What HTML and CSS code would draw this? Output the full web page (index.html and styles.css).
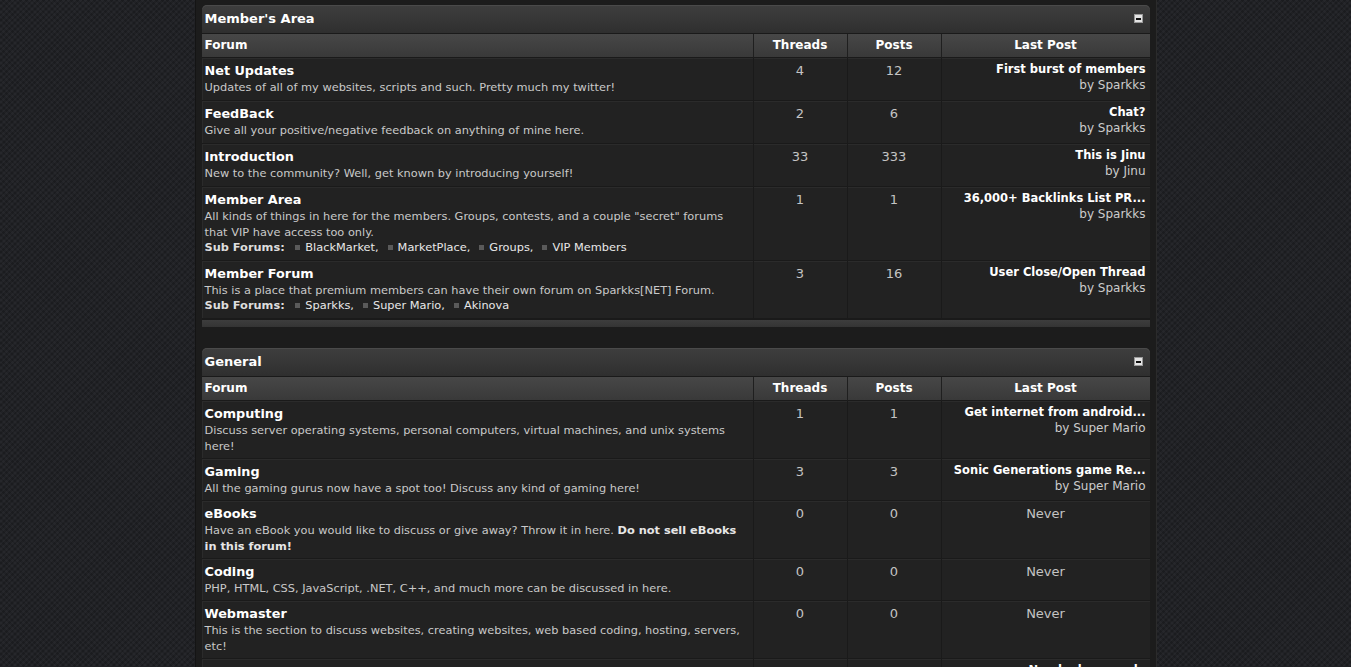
FILE: index.html
```html
<!DOCTYPE html>
<html>
<head>
<meta charset="utf-8">
<title>Sparkks[NET] Forum</title>
<link rel="stylesheet" href="styles.css">
</head>
<body>
<div class="wrapper">

<table class="cat">
  <colgroup><col class="w-forum"><col class="w-num"><col class="w-num"><col class="w-last"></colgroup>
  <thead>
    <tr><th class="cat-title" colspan="4"><span class="cat-name">Member's Area</span><span class="collapse"></span></th></tr>
    <tr class="cols">
      <th class="c-forum">Forum</th>
      <th class="c-num">Threads</th>
      <th class="c-num">Posts</th>
      <th class="c-last">Last Post</th>
    </tr>
  </thead>
  <tbody>
    <tr>
      <td class="forum"><div class="ftitle">Net Updates</div><div class="desc">Updates of all of my websites, scripts and such. Pretty much my twitter!</div></td>
      <td class="num">4</td><td class="num">12</td>
      <td class="last"><div class="lp">First burst of members</div><div class="by">by Sparkks</div></td>
    </tr>
    <tr>
      <td class="forum"><div class="ftitle">FeedBack</div><div class="desc">Give all your positive/negative feedback on anything of mine here.</div></td>
      <td class="num">2</td><td class="num">6</td>
      <td class="last"><div class="lp">Chat?</div><div class="by">by Sparkks</div></td>
    </tr>
    <tr>
      <td class="forum"><div class="ftitle">Introduction</div><div class="desc">New to the community? Well, get known by introducing yourself!</div></td>
      <td class="num">33</td><td class="num">333</td>
      <td class="last"><div class="lp">This is Jinu</div><div class="by">by Jinu</div></td>
    </tr>
    <tr>
      <td class="forum"><div class="ftitle">Member Area</div><div class="desc">All kinds of things in here for the members. Groups, contests, and a couple "secret" forums that VIP have access too only.</div>
        <div class="subs"><b>Sub Forums:</b> <span class="sub"><i></i>BlackMarket,</span><span class="sub"><i></i>MarketPlace,</span><span class="sub"><i></i>Groups,</span><span class="sub"><i></i>VIP Members</span></div></td>
      <td class="num">1</td><td class="num">1</td>
      <td class="last"><div class="lp">36,000+ Backlinks List PR...</div><div class="by">by Sparkks</div></td>
    </tr>
    <tr>
      <td class="forum"><div class="ftitle">Member Forum</div><div class="desc">This is a place that premium members can have their own forum on Sparkks[NET] Forum.</div>
        <div class="subs"><b>Sub Forums:</b> <span class="sub"><i></i>Sparkks,</span><span class="sub"><i></i>Super Mario,</span><span class="sub"><i></i>Akinova</span></div></td>
      <td class="num">3</td><td class="num">16</td>
      <td class="last"><div class="lp">User Close/Open Thread</div><div class="by">by Sparkks</div></td>
    </tr>
  </tbody>
  <tfoot><tr><td class="foot" colspan="4"></td></tr></tfoot>
</table>

<table class="cat compact">
  <colgroup><col class="w-forum"><col class="w-num"><col class="w-num"><col class="w-last"></colgroup>
  <thead>
    <tr><th class="cat-title" colspan="4"><span class="cat-name">General</span><span class="collapse"></span></th></tr>
    <tr class="cols">
      <th class="c-forum">Forum</th>
      <th class="c-num">Threads</th>
      <th class="c-num">Posts</th>
      <th class="c-last">Last Post</th>
    </tr>
  </thead>
  <tbody>
    <tr>
      <td class="forum"><div class="ftitle">Computing</div><div class="desc">Discuss server operating systems, personal computers, virtual machines, and unix systems here!</div></td>
      <td class="num">1</td><td class="num">1</td>
      <td class="last"><div class="lp">Get internet from android...</div><div class="by">by Super Mario</div></td>
    </tr>
    <tr>
      <td class="forum"><div class="ftitle">Gaming</div><div class="desc">All the gaming gurus now have a spot too! Discuss any kind of gaming here!</div></td>
      <td class="num">3</td><td class="num">3</td>
      <td class="last"><div class="lp">Sonic Generations game Re...</div><div class="by">by Super Mario</div></td>
    </tr>
    <tr>
      <td class="forum"><div class="ftitle">eBooks</div><div class="desc">Have an eBook you would like to discuss or give away? Throw it in here. <b>Do not sell eBooks in this forum!</b></div></td>
      <td class="num">0</td><td class="num">0</td>
      <td class="never">Never</td>
    </tr>
    <tr>
      <td class="forum"><div class="ftitle">Coding</div><div class="desc">PHP, HTML, CSS, JavaScript, .NET, C++, and much more can be discussed in here.</div></td>
      <td class="num">0</td><td class="num">0</td>
      <td class="never">Never</td>
    </tr>
    <tr>
      <td class="forum"><div class="ftitle">Webmaster</div><div class="desc">This is the section to discuss websites, creating websites, web based coding, hosting, servers, etc!</div></td>
      <td class="num">0</td><td class="num">0</td>
      <td class="never">Never</td>
    </tr>
    <tr>
      <td class="forum"><div class="ftitle">Graphics</div><div class="desc">Share your designs, logos and artwork with the community.</div></td>
      <td class="num">2</td><td class="num">4</td>
      <td class="last"><div class="lp">Need a logo made</div><div class="by">by Sparkks</div></td>
    </tr>
  </tbody>
</table>

</div>
</body>
</html>
```

FILE: styles.css
```css
html, body {
  margin: 0;
  padding: 0;
}
body {
  background-color: #212226;
  background-image:
    repeating-linear-gradient(45deg, rgba(255,255,255,0.025) 0 2px, transparent 2px 4px),
    repeating-linear-gradient(-45deg, rgba(0,0,0,0.18) 0 2px, transparent 2px 4px);
  font-family: "DejaVu Sans", Verdana, sans-serif;
  color: #cfcfcf;
  min-height: 100vh;
}
.wrapper {
  width: 948px;
  margin: 0 auto;
  padding: 5px 6px 20px;
  background: #1c1c1c;
  border-left: 1px solid #141414;
  border-right: 1px solid #2b2b2b;
  min-height: 100vh;
}
table.cat {
  width: 948px;
  border-collapse: separate;
  border-spacing: 0;
  table-layout: fixed;
  margin-bottom: 21px;
}
.w-forum { width: 552px; }
.w-num { width: 94px; }
.w-last { width: 208px; }
.cat th, .cat td {
  box-sizing: border-box;
}
.cat-title {
  height: 28px;
  padding: 0 7px 1px 3px;
  text-align: left;
  font-size: 13px;
  font-weight: bold;
  line-height: 27px;
  color: #ffffff;
  background: linear-gradient(#3e3e3e, #2f2f2f);
  border-top-left-radius: 5px;
  border-top-right-radius: 5px;
  border-bottom: 1px solid #1a1a1a;
  box-shadow: inset 0 1px 0 #4a4a4a;
}
.cat-name {
  float: left;
}
.collapse {
  float: right;
  width: 9px;
  height: 9px;
  margin-top: 9px;
  box-sizing: border-box;
  background: #e4e4e4;
  border: 1px solid #9a9a9a;
  position: relative;
}
.collapse::after {
  content: "";
  position: absolute;
  left: 1px;
  top: 3px;
  width: 5px;
  height: 1px;
  background: #111;
  box-shadow: 0 1px 0 #111;
}
.cols th {
  height: 24px;
  font-size: 12px;
  font-weight: bold;
  color: #ffffff;
  background: linear-gradient(#474747, #393939);
  border-right: 1px solid #1f1f1f;
  border-bottom: 1px solid #1a1a1a;
  padding: 0 4px;
  line-height: 23px;
}
.cols th.c-forum {
  padding-left: 3px;
}
.cols th:last-child {
  border-right: 0;
}
.c-forum { text-align: left; }
.c-num { text-align: center; }
.c-last { text-align: center; }

.cat tbody td {
  background: #222222;
  border-right: 1px solid #1a1a1a;
  border-bottom: 1px solid #1a1a1a;
  box-shadow: inset 0 1px 0 #2b2b2b;
  vertical-align: top;
  padding: 4px 4px 5px;
}
.cat tbody td.forum {
  padding-left: 3px;
  box-shadow: inset 1px 1px 0 #2b2b2b;
}
.cat.compact tbody td {
  padding-bottom: 4px;
}
.cat tbody td:last-child {
  border-right: 0;
}
.ftitle {
  font-size: 12.8px;
  font-weight: bold;
  line-height: 17px;
  color: #ffffff;
}
.desc {
  font-size: 11.35px;
  line-height: 16px;
  color: #c9c9c9;
}
.desc b {
  color: #e6e6e6;
}
.subs {
  font-size: 11.35px;
  line-height: 15px;
  color: #dddddd;
}
.subs b {
  margin-right: 4px;
}
.sub {
  margin-right: 6px;
  color: #e8e8e8;
}
.sub i {
  display: inline-block;
  width: 5px;
  height: 5px;
  background: #5a5a5a;
  margin: 0 5px 1px 3px;
  vertical-align: middle;
}
.num, .never {
  text-align: center;
  font-size: 13px;
  line-height: 18px;
  color: #c4c4c4;
}
.cat tbody td.last {
  text-align: right;
  padding-top: 4px;
}
.lp {
  font-size: 11.5px;
  font-weight: bold;
  line-height: 15px;
  color: #ffffff;
  white-space: nowrap;
}
.by {
  font-size: 12px;
  line-height: 16px;
  color: #cccccc;
}
.foot {
  height: 8px;
  padding: 0;
  background: linear-gradient(#3d3d3d, #343434);
  border-top: 1px solid #1a1a1a;
}
```
